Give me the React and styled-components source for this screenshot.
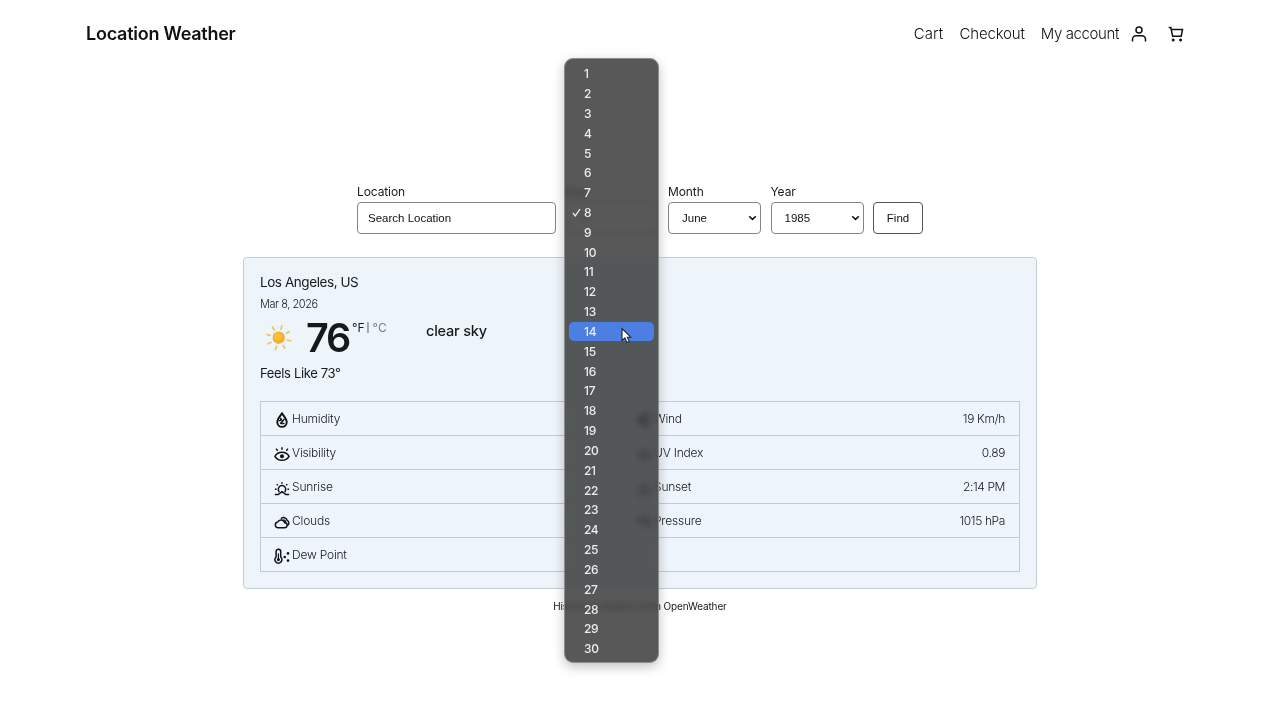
import React from "react";
import styled, { createGlobalStyle } from "styled-components";

const details = [
  { left: ["humidity", "Humidity"], right: ["wind", "Wind", "19 Km/h"] },
  { left: ["visibility", "Visibility"], right: ["uv", "UV Index", "0.89"] },
  { left: ["sunrise", "Sunrise"], right: ["sunset", "Sunset", "2:14 PM"] },
  { left: ["clouds", "Clouds"], right: ["pressure", "Pressure", "1015 hPa"] },
  { left: ["dew", "Dew Point"], right: null },
];

const days = Array.from({ length: 30 }, (_, i) => i + 1);

const sun = (
  <>
    <path d="M5.200 12.300L4.500 10.500a3.700 3.700 0 1 1 7 0l-.7 1.800" />
    <path d="M8 3.800V2.200M3.800 5.300l-1.100-1.100M12.200 5.300l1.100-1.100M2.600 9.300H.9M15.100 9.300h-1.700" />
    <path d="M.8 14.500h3.400L8 11.700l3.800 2.800h3.400" />
  </>
);

const drawings = {
  humidity: (
    <>
      <path d="M8 1.400C6 4.300 3.300 7.200 3.300 10.200a4.700 4.700 0 0 0 9.400 0C12.700 7.200 10 4.300 8 1.400z" strokeWidth="1.900" />
      <path d="M5 8.800l3-1.200M10.400 7l-4.200 4.800M6.800 5.800v2.500M7 11.500h3.500" />
    </>
  ),
  visibility: (
    <>
      <path d="M.9 10.300c1.700-2.800 4.200-4 7.100-4s5.400 1.200 7.100 4c-1.700 2.700-4.200 4-7.100 4s-5.400-1.300-7.100-4z" />
      <circle cx="8" cy="10.300" r="1.300" fill="#111" />
      <path d="M8 3.700V1.300M3.700 4.700L2.100 2.600M12.300 4.700l1.600-2.100" />
    </>
  ),
  sunrise: sun,
  sunset: sun,
  clouds: (
    <>
      <path d="M3.800 13.700a2.900 2.900 0 0 1-.2-5.700 3.900 3.900 0 0 1 7.200.7 2.500 2.500 0 0 1-.3 5z" />
      <path d="M7 4.700a3.700 3.700 0 0 1 6.200 1.700 2.900 2.900 0 0 1 .2 5.100" />
      <path d="M9.500 5.500a4.500 4.500 0 0 1 2.700 3.500" strokeWidth="1.200" />
    </>
  ),
  dew: (
    <>
      <path d="M2.100 9V3.500a2.300 2.300 0 0 1 4.600 0V9a3.500 3.500 0 1 1-4.600 0z" />
      <path d="M4.400 5.500v5" strokeWidth="1.200" />
      <circle cx="4.400" cy="11.600" r=".8" fill="#111" />
      <g fill="#111" stroke="none">
        <circle cx="10.700" cy="9" r="1.300" />
        <circle cx="14" cy="5.400" r="1.300" />
        <circle cx="14" cy="12.600" r="1.300" />
      </g>
    </>
  ),
  wind: <path d="M1 5h9a2 2 0 1 0-2-2M1 8h12M1 11h9a2 2 0 1 1-2 2" strokeWidth="2" />,
  uv: <path d="M4 12a5 5 0 1 1 8-6M5 9h8v4H7z" strokeWidth="1.500" />,
  pressure: <path d="M2 10a5.500 5.500 0 1 1 10 1l3 3M4 9h6" strokeWidth="2" />,
};

const DetailIcon = ({ name }) => (
  <Glyph viewBox="0 0 16 16">{drawings[name]}</Glyph>
);

const SunIcon = () => (
  <svg width="36" height="32" viewBox="0 0 36 32">
    <g stroke="#efc268" strokeWidth="1.700" strokeLinecap="round">
      {[15, 60, 105, 150, 195, 240, 285, 330].map((a) => (
        <path key={a} d="M18.700 6.800V3.400" transform={`rotate(${a} 18.700 15.700)`} />
      ))}
    </g>
    <circle cx="18.700" cy="15.700" r="6.200" fill="#f3af25" />
    <circle cx="17.700" cy="14.500" r="4" fill="#f9bf3a" />
  </svg>
);

const Chevron = () => (
  <svg width="9" height="6" viewBox="0 0 9 6">
    <path d="M1.200 1.200l3.300 3.200 3.300-3.200" fill="none" stroke="#111" strokeWidth="1.500" />
  </svg>
);

const App = () => {
  return (
    <Page>
      <GlobalStyle />
      <Header>
        <Brand>Location Weather</Brand>
        <Nav>
          <NavLink $spacing={0.1}>Cart</NavLink>
          <NavLink $spacing={-0.15}>Checkout</NavLink>
          <NavLink $spacing={-0.4}>My account</NavLink>
          <HeaderIcons>
            <svg width="16" height="18" viewBox="0 0 16 18">
              <circle cx="8" cy="5" r="3" />
              <path d="M1.500 16.500v-2.300a3.500 3.500 0 0 1 3.500-3.500h6a3.500 3.500 0 0 1 3.500 3.500v2.300" />
            </svg>
            <svg width="16" height="18" viewBox="0 0 16 18">
              <path d="M.7 2.500h2.100l1.900 8.800h8.500l1.300-6.900H3.300" />
              <circle cx="5.200" cy="15" r="1.100" fill="#111" strokeWidth="1" />
              <circle cx="12.600" cy="15" r="1.100" fill="#111" strokeWidth="1" />
            </svg>
          </HeaderIcons>
        </Nav>
      </Header>
      <SearchForm>
        <Field $width={199}>
          <Label>Location</Label>
          <Box>Search Location</Box>
        </Field>
        <Field $width={93}>
          <Label>Day</Label>
          <Box $select>
            <Chevron />
          </Box>
          <Menu>
            {days.map((day) => (
              <Option key={day} $active={day === 14}>
                <Check>
                  {day === 8 && (
                    <svg width="9" height="9" viewBox="0 0 9 9">
                      <path d="M1 5l2.300 2.800L8 1" fill="none" stroke="#eee" strokeWidth="1.300" />
                    </svg>
                  )}
                </Check>
                {day}
              </Option>
            ))}
            <Pointer width="13" height="18" viewBox="0 0 13 18">
              <path
                d="M2 1.500v12l2.900-2.500 2 4.400 2.400-1.100-2-4.100h3.500z"
                fill="#fff"
                stroke="#1c2430"
                strokeWidth="1.100"
              />
            </Pointer>
          </Menu>
        </Field>
        <Field $width={93}>
          <Label>Month</Label>
          <Box $select>
            June
            <Chevron />
          </Box>
        </Field>
        <Field $width={93}>
          <Label>Year</Label>
          <Box $select>
            1985
            <Chevron />
          </Box>
        </Field>
        <FindButton>Find</FindButton>
      </SearchForm>
      <Card>
        <City>Los Angeles, US</City>
        <DateText>Mar 8, 2026</DateText>
        <Current>
          <SunIcon />
          <Temperature>76</Temperature>
          <Units>
            °F<i>|</i>
            <span>°C</span>
          </Units>
          <Condition>clear sky</Condition>
        </Current>
        <Feels>Feels Like 73°</Feels>
        <Table>
          {details.map(({ left, right }) => (
            <Row key={left[1]}>
              <Cell>
                <DetailIcon name={left[0]} />
                <Name>{left[1]}</Name>
              </Cell>
              <Cell>
                {right && (
                  <>
                    <DetailIcon name={right[0]} />
                    <Name>{right[1]}</Name>
                    <Value>{right[2]}</Value>
                  </>
                )}
              </Cell>
            </Row>
          ))}
        </Table>
      </Card>
      <Credit>Historical weather from OpenWeather</Credit>
    </Page>
  );
};

const GlobalStyle = createGlobalStyle`
  * {
    box-sizing: border-box;
  }
  body {
    margin: 0;
    background: #fff;
    overflow: hidden;
  }
`;

const Page = styled.div`
  height: 720px;
  display: flex;
  flex-direction: column;
  align-items: center;
  font-family: Inter, sans-serif;
  color: #16191c;
  white-space: nowrap;
`;

const Header = styled.header`
  width: 100%;
  height: 67px;
  padding: 0 96px 0 86px;
  display: flex;
  align-items: center;
  justify-content: space-between;
`;

const Brand = styled.div`
  font-size: 18px;
  font-weight: 630;
  letter-spacing: -0.25px;
  color: #111;
`;

const Nav = styled.nav`
  display: flex;
  align-items: center;
  gap: 16px;
`;

const NavLink = styled.a`
  font-size: 15px;
  font-weight: 300;
  letter-spacing: ${({ $spacing }) => $spacing}px;
  color: #111;
`;

const HeaderIcons = styled.div`
  display: flex;
  gap: 21px;
  margin-left: -4px;
  svg {
    fill: none;
    stroke: #111;
    stroke-width: 1.5;
  }
`;

const SearchForm = styled.form`
  margin-top: 115px;
  height: 52px;
  display: flex;
  align-items: flex-end;
  gap: 9.5px;
`;

const Field = styled.div`
  position: relative;
  width: ${({ $width }) => $width}px;
`;

const Label = styled.div`
  height: 20px;
  line-height: 19px;
  font-size: 12px;
  letter-spacing: -0.1px;
`;

const Box = styled.div`
  height: 32px;
  padding: 0 ${({ $select }) => ($select ? "3px 0 13px" : "10px")};
  display: flex;
  align-items: center;
  justify-content: ${({ $select }) => ($select ? "space-between" : "flex-start")};
  border: 1px solid #858585;
  border-radius: 4px;
  background: #fff;
  font-family: "Liberation Sans", Arial, sans-serif;
  font-size: 11.5px;
  color: #111;
`;

const FindButton = styled.button`
  width: 50px;
  height: 32px;
  padding: 0;
  border: 1px solid #555;
  border-radius: 4px;
  background: #fff;
  font-family: "Liberation Sans", Arial, sans-serif;
  font-size: 11.5px;
  color: #111;
`;

const Menu = styled.div`
  position: absolute;
  z-index: 2;
  left: -2px;
  top: -124px;
  width: 95px;
  height: 605px;
  padding: 4.8px 4px;
  border: 1px solid #8b8d8e;
  border-radius: 9px;
  background: rgba(59, 59, 59, 0.85);
  backdrop-filter: blur(3px) saturate(2.5);
  box-shadow: 0 4px 12px rgba(0, 0, 0, 0.24);
`;

const Option = styled.div`
  height: 19.84px;
  display: flex;
  align-items: center;
  border-radius: 5px;
  background: ${({ $active }) => ($active ? "#4b7fe3" : "transparent")};
  color: #ececec;
  font-size: 12px;
  font-weight: 550;
  letter-spacing: -0.35px;
`;

const Check = styled.span`
  width: 15.5px;
  padding-left: 3px;
  display: flex;
`;

const Pointer = styled.svg`
  position: absolute;
  left: 55px;
  top: 268px;
`;

const Card = styled.section`
  width: 794px;
  height: 332px;
  margin-top: 22.5px;
  padding: 15px 16px;
  border: 1px solid #c5ced6;
  border-radius: 4px;
  background: #edf5fb;
`;

const City = styled.div`
  height: 20px;
  line-height: 19px;
  font-size: 13.5px;
  letter-spacing: -0.43px;
`;

const DateText = styled.div`
  height: 22px;
  line-height: 22px;
  font-size: 11px;
  font-weight: 350;
  letter-spacing: -0.45px;
`;

const Current = styled.div`
  height: 46px;
  display: flex;
  align-items: center;
`;

const Temperature = styled.div`
  width: 44px;
  margin: 0 0 0 10px;
  font-size: 39.5px;
  font-weight: 600;
  letter-spacing: -2.1px;
`;

const Units = styled.div`
  width: 36px;
  margin: -21px 0 0 2px;
  display: flex;
  align-items: center;
  font-size: 12px;
  i {
    font-style: normal;
    font-size: 9px;
    margin: 0 3px 0 2px;
  }
  span {
    color: #777d82;
  }
`;

const Condition = styled.div`
  margin: -15px 0 0 38px;
  font-size: 14.5px;
  font-weight: 550;
  letter-spacing: -0.2px;
`;

const Feels = styled.div`
  height: 40px;
  line-height: 24px;
  font-size: 13px;
  font-weight: 370;
  letter-spacing: -0.35px;
`;

const Table = styled.div`
  height: 171px;
  display: flex;
  flex-direction: column;
  border: 1px solid #c4cad5;
  background: #eef5fc;
`;

const Row = styled.div`
  flex: 1;
  display: grid;
  grid-template-columns: 362px 1fr;
  & + & {
    border-top: 1px solid #c4cad5;
  }
`;

const Cell = styled.div`
  display: flex;
  align-items: center;
  padding: 3px 14px 0 13px;
`;

const Glyph = styled.svg`
  width: 16px;
  height: 16px;
  margin-right: 2px;
  fill: none;
  stroke: #111;
  stroke-width: 1.5;
`;

const Name = styled.span`
  margin-bottom: 2px;
  font-size: 12px;
  font-weight: 350;
  letter-spacing: -0.2px;
`;

const Value = styled(Name)`
  margin-left: auto;
  letter-spacing: -0.38px;
`;

const Credit = styled.footer`
  margin-top: 10px;
  font-size: 10px;
  line-height: 14px;
  letter-spacing: -0.13px;
`;

export default App;
